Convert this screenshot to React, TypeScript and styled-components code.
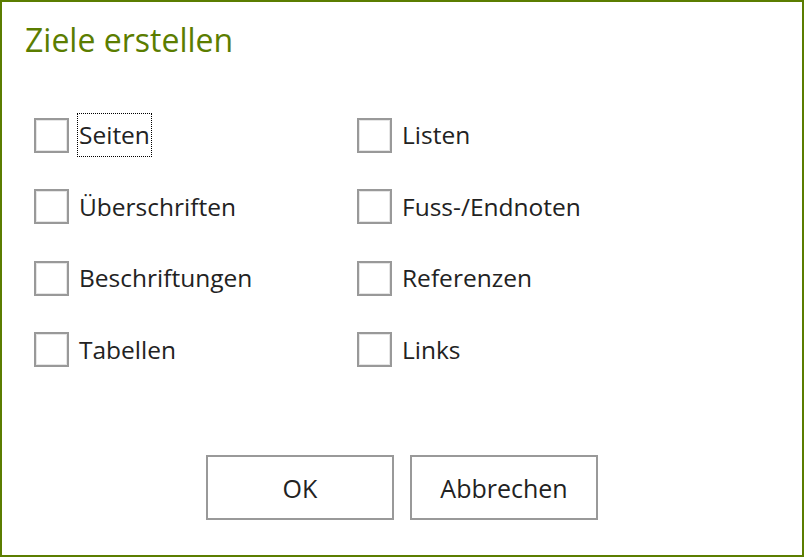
import React, { useState } from "react";
import styled, { createGlobalStyle } from "styled-components";

const GlobalStyle = createGlobalStyle`
  html, body {
    margin: 0;
    padding: 0;
    background: #ffffff;
  }
  * {
    box-sizing: border-box;
  }
`;

const targets = [
  "Seiten",
  "Listen",
  "Überschriften",
  "Fuss-/Endnoten",
  "Beschriftungen",
  "Referenzen",
  "Tabellen",
  "Links",
];

const Dialog = styled.div`
  width: 804px;
  height: 557px;
  border: 2px solid #5b7d00;
  background: #ffffff;
  font-family: "Open Sans", "Noto Sans", sans-serif;
  color: #222222;
  display: flex;
  flex-direction: column;
`;

const Title = styled.h1`
  margin: 0;
  padding: 18px 0 0 23px;
  font-size: 32px;
  font-weight: 400;
  line-height: 40px;
  color: #5b7d00;
`;

const OptionsGrid = styled.div`
  display: grid;
  grid-template-columns: 323px 323px;
  grid-auto-rows: 42px;
  row-gap: 29.5px;
  padding: 54px 0 0 32px;
`;

const Option = styled.label`
  display: flex;
  align-items: center;
  gap: 9px;
  cursor: pointer;
`;

const Box = styled.span<{ $checked: boolean }>`
  width: 35px;
  height: 35px;
  border: 2px solid #999999;
  background: #ffffff;
  box-shadow: inset 0 0 0 1px #e6e6e6;
  display: flex;
  align-items: center;
  justify-content: center;
  flex: none;
  svg {
    display: ${({ $checked }) => ($checked ? "block" : "none")};
  }
`;

const Label = styled.span<{ $focused: boolean }>`
  font-size: 24.5px;
  line-height: 42px;
  padding: 0 1px;
  outline: ${({ $focused }) => ($focused ? "1px dotted #000000" : "none")};
  outline-offset: 0;
`;

const Footer = styled.div`
  margin-top: auto;
  display: flex;
  justify-content: center;
  gap: 16px;
  padding-bottom: 35px;
`;

const Button = styled.button`
  width: 188px;
  height: 65px;
  border: 2px solid #999999;
  background: #ffffff;
  font-family: "Open Sans", "Noto Sans", sans-serif;
  font-size: 25px;
  color: #222222;
  cursor: pointer;
`;

const App = () => {
  const [checked, setChecked] = useState<Record<string, boolean>>({});

  return (
    <>
      <GlobalStyle />
      <Dialog>
        <Title>Ziele erstellen</Title>
        <OptionsGrid>
          {targets.map((t, i) => (
            <Option
              key={t}
              onClick={() => setChecked({ ...checked, [t]: !checked[t] })}
            >
              <Box $checked={!!checked[t]}>
                <svg width="22" height="22" viewBox="0 0 22 22">
                  <path d="M4 11l5 5 9-10" fill="none" stroke="#222222" strokeWidth="2" />
                </svg>
              </Box>
              <Label $focused={i === 0}>{t}</Label>
            </Option>
          ))}
        </OptionsGrid>
        <Footer>
          <Button>OK</Button>
          <Button>Abbrechen</Button>
        </Footer>
      </Dialog>
    </>
  );
};

export default App;
